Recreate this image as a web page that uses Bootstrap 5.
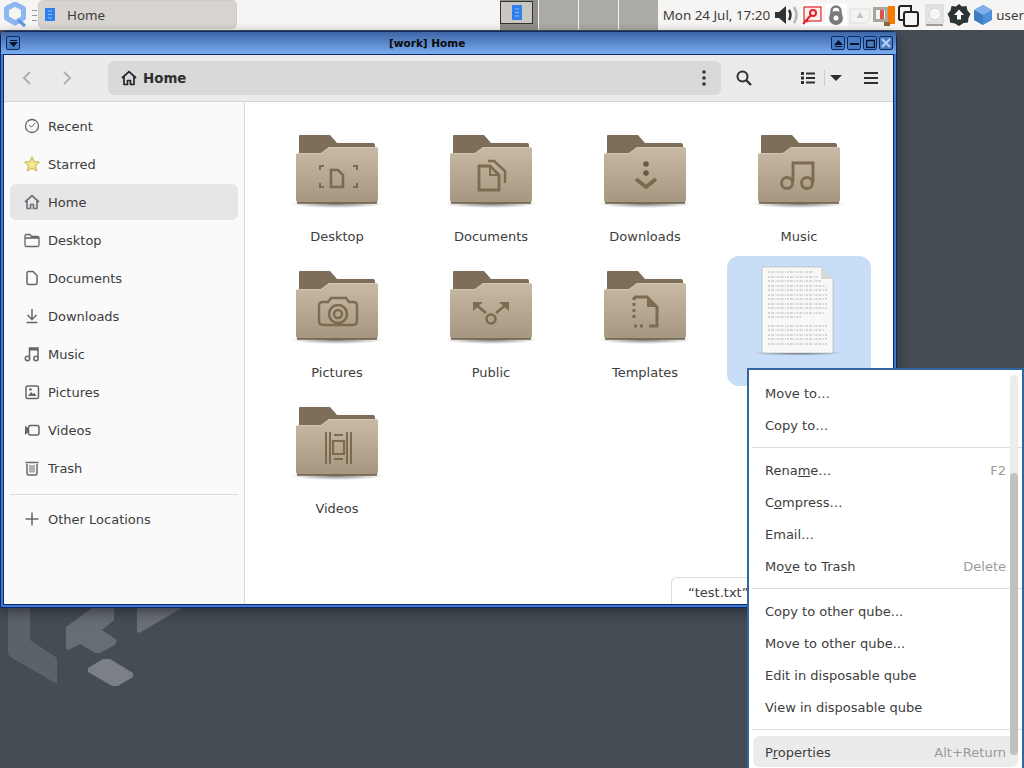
<!DOCTYPE html>
<html lang="en">

<head>
    <meta charset="UTF-8">
    <meta name="viewport" content="width=device-width, initial-scale=1.0">
    <title>Home</title>
    <link href="https://cdn.jsdelivr.net/npm/bootstrap@5.3.0/dist/css/bootstrap.min.css" rel="stylesheet">
    <style>
        html, body { height: 100%; overflow: hidden; }
        body { background: #454c54; font-family: "DejaVu Sans", sans-serif; font-size: 13px; color: #3d3d3d; }
        .desk { position: relative; width: 1024px; height: 768px; overflow: hidden; }

        /* top panel */
        .panel { height: 30px; background: #f6f5f3; font-family: "Noto Sans", sans-serif; font-size: 13.4px; color: #3c3c3c; }
        .panel svg { display: block; flex: none; }
        .q-logo { margin-left: 4px; }
        .grip { width: 5px; height: 11px; margin: 0 1px 0 5px; border-top: 1px solid #999; border-bottom: 1px solid #999; position: relative; }
        .grip::after { content: ""; position: absolute; left: 0; right: 0; top: 4px; border-top: 1px solid #999; }
        .task-btn { width: 200px; height: 29px; margin-bottom: 1px; background: #d8d4cf; border: 1px solid #cfcbc5; border-radius: 5px; padding-left: 6px; gap: 12px; }
        .task-btn span { padding-top: 2px; }
        .pager { margin-left: 263px; width: 158px; height: 30px; gap: 1px; }
        .pager-cell { flex: 1; background: #abaaa4; }
        .pager-cell.now { background: #8f8e89; flex: none; width: 38px; padding-top: 1px; }
        .mini-win { width: 33px; height: 23px; background: #cac7c1; border: 1px solid #33332f; }
        .clock { margin-left: 5px; width: 113px; white-space: nowrap; }
        .tray { gap: 2px; }
        .who { margin-left: 3px; }

        /* wallpaper logo + window */
        .wall-logo { position: absolute; left: 0; top: 600px; }
        .win { position: absolute; left: 0; top: 31px; width: 897px; height: 577px; background: #3f78d8; border: 1px solid #0b2a63; border-radius: 6px 6px 0 0; box-shadow: 0 4px 12px rgba(20, 24, 30, .55); }
        .win-title { height: 22px; padding: 0 3px 0 5px; background: linear-gradient(#3d65a5, #79acf0); }
        .win-title b { font-size: 10.5px; color: #0a0a0a; line-height: 1; margin-left: 369px; }
        .wm-btn { width: 14px; height: 14px; border: 1px solid #0b2a63; border-radius: 2px; background: #4a7cc4; }
        .wm-btns { gap: 2px; }
        .win-body { position: absolute; left: 2px; right: 2px; top: 22px; bottom: 2px; background: #fff; border: 1px solid #0b2a63; }
        .tool-bar { height: 47px; background: #ebebeb; border-bottom: 1px solid #d4d4d4; }
        .nav-arrows { width: 104px; padding-left: 15px; gap: 24px; }
        .path-bar { width: 613px; height: 34px; background: #d9d9d9; border-radius: 6px; padding: 0 14px 0 13px; font-size: 13.4px; font-weight: 700; color: #2e2e2e; gap: 6px; }
        .path-bar span { padding-top: 2px; }
        .tool-icons { margin-left: 15px; }
        .list-btn { margin-left: 48px; }
        .view-sep { margin: 0 5px 0 8px; }
        .menu-btn { margin-left: 22px; }
        .side-bar { width: 241px; flex: none; background: #fafafa; border-right: 1px solid #d9d9d9; padding: 6px 6px 0 6px; }
        .side-item { height: 36px; margin-bottom: 2px; padding-left: 14px; gap: 8px; border-radius: 6px; color: #3d3d3d; line-height: 22px; }
        .side-item span { padding-top: 2px; }
        .side-item.here { background: #e6e6e6; }
        .side-sep { border-top: 1px solid #dcdcdc; margin: 8px 0 6px; }
        .files { flex: 1; padding: 18px 0 0 20px; gap: 6px 10px; display: grid; grid-template-columns: repeat(4, 144px); grid-auto-rows: 130px; }
        .file-cell { border-radius: 12px; text-align: center; padding-top: 3px; color: #3d3d3d; }
        .file-cell svg { display: block; margin: 0 auto; }
        .file-cell span { display: block; margin-top: 8px; line-height: 20px; }
        .file-cell.sel { background: #c8ddf6; }
        .floating { position: absolute; left: 667px; bottom: 0; height: 27px; width: 200px; padding-left: 16px; line-height: 29px; background: #fff; border: 1px solid #dcdcdc; border-bottom: 0; border-radius: 6px 6px 0 0; }

        /* context menu */
        .ctx.dropdown-menu { position: absolute; left: 747px; top: 368px; width: 277px; height: 402px; padding: 7px 0 0 0; margin: 0; border: 2px solid #33669f; border-radius: 0; font-size: 13px; min-width: 0; background: #fff; color: #3d3d3d; }
        .ctx .dropdown-item { height: 32px; line-height: 34px; padding: 0 16px; color: #3d3d3d; display: flex; justify-content: space-between; }
        .ctx .dropdown-item.hot { background: #ebebeb; height: 31px; line-height: 33px; margin: 1px 4px 0; padding: 0 12px; width: auto; border-radius: 6px; }
        .ctx .dropdown-divider { margin: 6px 0 6px 3px; border-top: 1px solid #dcdcdc; opacity: 1; height: 0; }
        .keys { color: #9a9a9a; }
        .trough { position: absolute; right: 4px; top: 5px; width: 8px; height: 383px; border-radius: 4px; background: #ececec; }
        .thumb { position: absolute; left: 0; right: 0; top: 98px; bottom: 3px; border-radius: 4px; background: #c0c0c0; }
    </style>
</head>

<body>
    <svg width="0" height="0" class="position-absolute">
        <defs>
            <linearGradient id="fold" x1="0" y1="0" x2="0" y2="1">
                <stop offset="0" stop-color="#c8baa4" />
                <stop offset="1" stop-color="#a5967f" />
            </linearGradient>
            <radialGradient id="shade">
                <stop offset="0" stop-color="#000" stop-opacity=".5" />
                <stop offset="1" stop-color="#000" stop-opacity="0" />
            </radialGradient>
            <symbol id="folder" viewBox="0 0 96 96">
                <ellipse cx="48" cy="81" rx="47" ry="4" fill="url(#shade)" />
                <path d="M11 12H41L48 20H84Q86 20 86 22V40H10V13Q10 12 11 12Z" fill="#7d6d59" />
                <path d="M9 30H32L40 24H87Q89 24 89 26V76Q89 80 86 80H10Q7 80 7 76V32Q7 30 9 30Z" fill="url(#fold)" />
                <path d="M8 30.500H32L40 24.500H88" fill="none" stroke="#d6cab7" stroke-width=".8" />
                <path d="M8 80H88" stroke="#6a5c4b" stroke-width="1.400" />
            </symbol>
            <!-- sidebar icons -->
            <symbol id="i-home" viewBox="0 0 16 16"><path d="M1 8 8 1.600 15 8M3 7V14.500H6.500V10.500H9.500V14.500H13V7" fill="none" stroke="currentColor" stroke-width="1.700" stroke-linejoin="round" /></symbol>
        </defs>
    </svg>

    <div class="desk">
        <!-- Panel -->
        <div class="panel d-flex align-items-center">
            <svg class="q-logo" width="23" height="26" viewBox="0 0 23 26"><path d="M11 2 19.500 6.500V16L11 21 2.500 16V6.500Z" fill="none" stroke="#8db6f2" stroke-width="5" stroke-linejoin="round" /><path d="M14 18 21 24" stroke="#5c97ea" stroke-width="3" /></svg>
            <div class="grip"></div>
            <div class="task-btn d-flex align-items-center">
                <svg width="10" height="13" viewBox="0 0 10 13"><rect width="10" height="13" fill="#2f80ed" /><path d="M3 3H7M3 6.500H7M3 10H7" stroke="#8fbdf7" /></svg>
                <span>Home</span>
            </div>
            <div class="pager d-flex">
                <div class="pager-cell now"><div class="mini-win d-flex justify-content-center align-items-center"><svg width="10" height="15" viewBox="0 0 10 15"><rect width="10" height="15" fill="#2f80ed" /><path d="M3 4H7M3 7.500H7M3 11H7" stroke="#8fbdf7" /></svg></div></div>
                <div class="pager-cell"></div>
                <div class="pager-cell"></div>
                <div class="pager-cell"></div>
            </div>
            <div class="clock">Mon 24 Jul, 17:20</div>
            <div class="tray d-flex align-items-center">
                <svg width="24" height="22" viewBox="0 0 24 22"><path d="M0 8H4L11 2V20L4 14H0Z" fill="#2e3436" /><path d="M14 6Q17 11 14 16" fill="none" stroke="#2e3436" stroke-width="2.500" /><path d="M19 3Q24 11 19 19" fill="none" stroke="#b5b5b5" stroke-width="2.500" /></svg>
                <svg width="22" height="22" viewBox="0 0 22 22"><rect width="22" height="22" fill="#fff" /><rect x="3" y="3" width="17" height="14" fill="#fdeeee" stroke="#e2222a" stroke-width="1.200" /><circle cx="12" cy="9" r="3" fill="none" stroke="#e2222a" stroke-width="2" /><path d="M10 11 2 20M5 15 7 18" stroke="#e2222a" stroke-width="2" /></svg>
                <svg width="22" height="22" viewBox="0 0 22 22"><rect width="22" height="22" fill="#fff" /><path d="M6.500 10V7A4.500 4.500 0 0 1 15.500 7V10" fill="none" stroke="#7a7a7a" stroke-width="2.500" /><circle cx="11" cy="14" r="7" fill="#7a7a7a" /><circle cx="11" cy="14" r="2.500" fill="#fff" /></svg>
                <svg width="22" height="22" viewBox="0 0 22 22"><path d="M1 5H21V15L16 19H1Z" fill="#f3f3f3" stroke="#dcdcdc" /><path d="M11 8 14.500 14H7.500Z" fill="#c4c4c4" /></svg>
                <svg width="22" height="24" viewBox="0 0 22 24"><rect x="0" y="4" width="15" height="15" fill="#aaa59d" /><rect x="3" y="7" width="9" height="9" fill="#f3f3f3" /><rect x="7" y="7" width="4" height="9" fill="#d9534f" /><rect x="15" y="3" width="7" height="18" fill="#f57c00" /><rect x="11" y="19" width="6" height="4" fill="#8a6a3b" /></svg>
                <svg width="22" height="24" viewBox="0 0 22 24"><path d="M2 17V5Q2 3 4 3H14V8M2 17H6" fill="none" stroke="#222" stroke-width="2" /><rect x="7" y="9" width="14" height="14" rx="2" fill="#f6f5f3" stroke="#222" stroke-width="2" /></svg>
                <svg width="20" height="24" viewBox="0 0 20 24" class="ms-1"><rect x="1" y="2" width="17" height="18" fill="#e6e6e6" stroke="#d0d0d0" /><circle cx="10" cy="11" r="6" fill="#f6f6f6" stroke="#cfcfcf" /><path d="M1 22H18" stroke="#444" /></svg>
                <svg width="24" height="24" viewBox="0 0 24 24"><path d="M12 1 15 3.500 19.500 3 20.500 7.500 23.500 11 21.500 15 21 19.500 16.500 20 12 23 8 20.500 3 19.500 2.500 15 .5 11 3.500 7.500 4.500 3 9 3.500Z" fill="#2e3436" /><path d="M12 6.500 17 12H14V16.500H10V12H7Z" fill="#fff" /></svg>
                <svg width="20" height="24" viewBox="0 0 20 24"><path d="M10 2 19 7V17L10 22 1 17V7Z" fill="#4f8fd9" /><path d="M10 2 19 7 10 12 1 7Z" fill="#7fb2ea" /><path d="M10 12V22L1 17V7Z" fill="#3f7cc4" /></svg>
            </div>
            <div class="who">user</div>
        </div>

        <!-- wallpaper -->
        <svg class="wall-logo" width="200" height="100" viewBox="0 0 200 100">
            <path d="M8 0H30V40L57 58V84L12 58Q8 55 8 52Z" fill="#5c6269" />
            <path d="M66 27 92 8H114V20L102 30 117 40 115 45 100 53H95L80 44 68 50 66 48Z" fill="#676d74" />
            <path d="M137 8H182L139 33 137 32Z" fill="#6a7076" />
            <path d="M88 68 103 59H110L133 73V77L118 86H112L88 72Z" fill="#7b8087" />
        </svg>

        <!-- Window -->
        <div class="win">
            <div class="win-title d-flex align-items-center">
                <div class="wm-btn d-flex align-items-center justify-content-center"><svg width="9" height="7" viewBox="0 0 9 7"><path d="M1 0H8V1H1ZM0 2H9L4.500 7Z" fill="#06122e" /></svg></div>
                <b>[work] Home</b>
                <div class="wm-btns d-flex ms-auto">
                    <div class="wm-btn d-flex align-items-center justify-content-center"><svg width="9" height="7" viewBox="0 0 9 7"><path d="M4.500 0 9 5H0ZM1 6H8V7H1Z" fill="#06122e" /></svg></div>
                    <div class="wm-btn d-flex align-items-end justify-content-center pb-1"><svg width="9" height="2" viewBox="0 0 9 2"><rect width="9" height="2" fill="#06122e" /></svg></div>
                    <div class="wm-btn d-flex align-items-center justify-content-center"><svg width="9" height="9" viewBox="0 0 9 9"><path d="M.5 1.500H8.500V8.500H.5Z" fill="none" stroke="#06122e" stroke-width="1.500" /></svg></div>
                    <div class="wm-btn d-flex align-items-center justify-content-center"><svg width="10" height="10" viewBox="0 0 10 10"><path d="M1 1 9 9M9 1 1 9" stroke="#b9d2f3" stroke-width="2" /></svg></div>
                </div>
            </div>
            <div class="win-body d-flex flex-column">
                <div class="tool-bar d-flex align-items-center">
                    <div class="nav-arrows d-flex align-items-center">
                        <svg width="16" height="16" viewBox="0 0 16 16"><path d="M11 2 5 8 11 14" fill="none" stroke="#b0b0b0" stroke-width="2" /></svg>
                        <svg width="16" height="16" viewBox="0 0 16 16"><path d="M5 2 11 8 5 14" fill="none" stroke="#b0b0b0" stroke-width="2" /></svg>
                    </div>
                    <div class="path-bar d-flex align-items-center">
                        <svg width="16" height="16" class="text-dark"><use href="#i-home" /></svg>
                        <span class="flex-grow-1">Home</span>
                        <svg width="6" height="16" viewBox="0 0 6 16"><circle cx="3" cy="2" r="1.800" fill="#333" /><circle cx="3" cy="8" r="1.800" fill="#333" /><circle cx="3" cy="14" r="1.800" fill="#333" /></svg>
                    </div>
                    <div class="tool-icons d-flex align-items-center">
                        <svg width="16" height="16" viewBox="0 0 16 16"><circle cx="6.500" cy="6.500" r="5" fill="none" stroke="#2e2e2e" stroke-width="2" /><path d="M10 10 15 15" stroke="#2e2e2e" stroke-width="2.400" /></svg>
                        <svg class="list-btn" width="16" height="14" viewBox="0 0 16 14"><path d="M1 1H4V4H1ZM1 5.500H4V8.500H1ZM1 10H4V13H1Z" fill="#2e2e2e" /><path d="M6 2.500H15M6 7H15M6 11.500H15" stroke="#2e2e2e" stroke-width="2" /></svg>
                        <div class="vr view-sep text-secondary"></div>
                        <svg width="12" height="6" viewBox="0 0 12 6"><path d="M0 0H12L6 6Z" fill="#2e2e2e" /></svg>
                        <svg class="menu-btn" width="14" height="12" viewBox="0 0 14 12"><path d="M0 1H14M0 6H14M0 11H14" stroke="#2e2e2e" stroke-width="2" /></svg>
                    </div>
                </div>

                <div class="d-flex flex-grow-1 position-relative">
                    <div class="side-bar">
                        <div class="side-item d-flex align-items-center">
                            <svg width="16" height="16" viewBox="0 0 16 16"><circle cx="8" cy="8" r="6.500" fill="none" stroke="#666" stroke-width="1.300" /><path d="M5 7 7.500 9 11 5" fill="none" stroke="#666" /></svg><span>Recent</span></div>
                        <div class="side-item d-flex align-items-center">
                            <svg width="16" height="16" viewBox="0 0 16 16"><path d="M8 .8 10.200 5.600 15.400 6.200 11.500 9.700 12.600 15 8 12.300 3.400 15 4.500 9.700 .6 6.200 5.800 5.600Z" fill="#f5e68f" stroke="#c8b04a" /></svg><span>Starred</span></div>
                        <div class="side-item here d-flex align-items-center">
                            <svg width="16" height="16" class="text-secondary"><use href="#i-home" /></svg><span>Home</span></div>
                        <div class="side-item d-flex align-items-center">
                            <svg width="16" height="16" viewBox="0 0 16 16"><path d="M1 13V4Q1 2.500 2.500 2.500H6L7.500 4.500H13.500Q15 4.500 15 6V13Q15 14.500 13.500 14.500H2.500Q1 14.500 1 13ZM1.500 6H14.500" fill="none" stroke="#666" stroke-width="1.300" /></svg><span>Desktop</span></div>
                        <div class="side-item d-flex align-items-center">
                            <svg width="16" height="16" viewBox="0 0 16 16"><path d="M3 3Q3 1.500 4.500 1.500H9L13 5.500V13Q13 14.500 11.500 14.500H4.500Q3 14.500 3 13Z" fill="none" stroke="#666" stroke-width="1.500" /></svg><span>Documents</span></div>
                        <div class="side-item d-flex align-items-center">
                            <svg width="16" height="16" viewBox="0 0 16 16"><path d="M8 1V11M3.500 7 8 11.500 12.500 7M2.500 14.500H13.500" fill="none" stroke="#666" stroke-width="1.500" /></svg><span>Downloads</span></div>
                        <div class="side-item d-flex align-items-center">
                            <svg width="16" height="16" viewBox="0 0 16 16"><path d="M5.500 11.500V2H14V11.500" fill="none" stroke="#666" stroke-width="1.500" /><path d="M5.500 2H14V4.500H5.500Z" fill="#666" /><circle cx="3.500" cy="12.500" r="2.200" fill="none" stroke="#666" stroke-width="1.500" /><circle cx="12" cy="12.500" r="2.200" fill="none" stroke="#666" stroke-width="1.500" /></svg><span>Music</span></div>
                        <div class="side-item d-flex align-items-center">
                            <svg width="16" height="16" viewBox="0 0 16 16"><rect x="2" y="2" width="12.500" height="12.500" rx="1.500" fill="none" stroke="#666" stroke-width="1.500" /><path d="M4 12 7 8 9 10 10.500 9 12.500 12Z" fill="#666" /><circle cx="6.500" cy="5.500" r="1.300" fill="#666" /></svg><span>Pictures</span></div>
                        <div class="side-item d-flex align-items-center">
                            <svg width="16" height="16" viewBox="0 0 16 16"><rect x="4.500" y="3.500" width="10.500" height="9.500" rx="2" fill="none" stroke="#666" stroke-width="1.500" /><path d="M1 3.500 4.500 6.500V10L1 13Z" fill="#666" /></svg><span>Videos</span></div>
                        <div class="side-item d-flex align-items-center">
                            <svg width="16" height="16" viewBox="0 0 16 16"><path d="M1.500 2.500H14.500" stroke="#666" stroke-width="1.500" /><path d="M3 4V13.500Q3 15 4.500 15H11.500Q13 15 13 13.500V4" fill="none" stroke="#666" stroke-width="1.500" /><path d="M6 5V12.500M8 5V12.500M10 5V12.500" stroke="#666" /></svg><span>Trash</span></div>
                        <div class="side-sep"></div>
                        <div class="side-item d-flex align-items-center">
                            <svg width="16" height="16" viewBox="0 0 16 16"><path d="M8 1.500V14.500M1.500 8H14.500" stroke="#666" stroke-width="1.500" /></svg><span>Other Locations</span></div>
                    </div>

                    <div class="files">
                        <div class="file-cell">
                            <svg width="96" height="96"><use href="#folder" />
                                <path d="M35 43H31V47M64 43H68V47M31 60V64H35M68 60V64H64" fill="none" stroke="#7d6a50" stroke-width="2" />
                                <path d="M42 47H49L54 52V64H42Z" fill="none" stroke="#7d6a50" stroke-width="2.600" />
                            </svg><span>Desktop</span></div>
                        <div class="file-cell">
                            <svg width="96" height="96"><use href="#folder" />
                                <path d="M36 43H47L56 52V67H36Z" fill="none" stroke="#7d6a50" stroke-width="2.800" />
                                <path d="M47 44V52H56" fill="none" stroke="#7d6a50" stroke-width="2" />
                                <path d="M45 38H51L62 48V60" fill="none" stroke="#7d6a50" stroke-width="2.400" />
                            </svg><span>Documents</span></div>
                        <div class="file-cell">
                            <svg width="96" height="96"><use href="#folder" />
                                <circle cx="49" cy="41" r="2.800" fill="#6b583f" />
                                <circle cx="49" cy="50" r="2.800" fill="#6b583f" />
                                <path d="M39 56 49 64 59 56" fill="none" stroke="#7d6a50" stroke-width="4" />
                            </svg><span>Downloads</span></div>
                        <div class="file-cell">
                            <svg width="96" height="96"><use href="#folder" />
                                <circle cx="36" cy="60" r="5.500" fill="none" stroke="#7d6a50" stroke-width="2.800" />
                                <circle cx="56" cy="60" r="5.500" fill="none" stroke="#7d6a50" stroke-width="2.800" />
                                <path d="M42 59V40H62V59" fill="none" stroke="#7d6a50" stroke-width="2.800" />
                            </svg><span>Music</span></div>
                        <div class="file-cell">
                            <svg width="96" height="96"><use href="#folder" />
                                <path d="M34 43H39L42 39H57L60 43H64Q68 43 68 47V62Q68 66 64 66H34Q30 66 30 62V47Q30 43 34 43Z" fill="none" stroke="#7d6a50" stroke-width="2.400" />
                                <circle cx="49" cy="55" r="9" fill="none" stroke="#7d6a50" stroke-width="2.600" />
                                <circle cx="49" cy="55" r="4" fill="none" stroke="#7d6a50" stroke-width="2.400" />
                            </svg><span>Pictures</span></div>
                        <div class="file-cell">
                            <svg width="96" height="96"><use href="#folder" />
                                <circle cx="48" cy="60" r="4.500" fill="none" stroke="#7d6a50" stroke-width="2.600" />
                                <path d="M31 44 43 54M65 44 53 54" stroke="#7d6a50" stroke-width="2.800" />
                                <path d="M30 43H40L30 52ZM66 43H56L66 52Z" fill="#7d6a50" />
                            </svg><span>Public</span></div>
                        <div class="file-cell">
                            <svg width="96" height="96"><use href="#folder" />
                                <path d="M37 38H50L60 48V67H52" fill="none" stroke="#7d6a50" stroke-width="3" />
                                <path d="M37 38V60M37 67H49" fill="none" stroke="#7d6a50" stroke-width="3" stroke-dasharray="3 3" />
                                <path d="M50 39V48H59Z" fill="#7d6a50" />
                            </svg><span>Templates</span></div>
                        <div class="file-cell sel">
                            <svg width="96" height="96" viewBox="0 0 96 96">
                                <ellipse cx="47" cy="94" rx="44" ry="3" fill="url(#shade)" />
                                <path d="M11 8H70L82 20V94H11Z" fill="#f8f8f6" stroke="#a9adb0" stroke-width=".6" />
                                <path d="M70 8V20H82Z" fill="#d9d9d9" />
                                <path d="M17 13H63M17 18H67M17 22H70M17 27H75M17 31H76M17 36H76M17 40H76M17 45H76M17 49H76M17 54H74M17 58H50M17 67H76M17 71H74M17 76H76M17 80H76M17 85H76" stroke="#a0a3a6" stroke-width=".8" stroke-dasharray="2 1 3 1.500 1 1" />
                            </svg><span>test.txt</span></div>
                        <div class="file-cell">
                            <svg width="96" height="96"><use href="#folder" />
                                <path d="M37 37V69M62 37V69M41 37V69M58 37V69M45 40H54M45 64H54" fill="none" stroke="#7d6a50" stroke-width="2" />
                                <path d="M44 46H55V59H44Z" fill="none" stroke="#7d6a50" stroke-width="2.200" />
                            </svg><span>Videos</span></div>
                    </div>
                    <div class="floating">“test.txt”</div>
                </div>
            </div>
        </div>

        <!-- Context menu -->
        <div class="ctx dropdown-menu show">
            <div class="dropdown-item">Move to…</div>
            <div class="dropdown-item">Copy to…</div>
            <div class="dropdown-divider"></div>
            <div class="dropdown-item"><span>Rena<u>m</u>e…</span><span class="keys">F2</span></div>
            <div class="dropdown-item"><span>C<u>o</u>mpress…</span></div>
            <div class="dropdown-item">Email…</div>
            <div class="dropdown-item"><span>Mo<u>v</u>e to Trash</span><span class="keys">Delete</span></div>
            <div class="dropdown-divider"></div>
            <div class="dropdown-item">Copy to other qube...</div>
            <div class="dropdown-item">Move to other qube...</div>
            <div class="dropdown-item">Edit in disposable qube</div>
            <div class="dropdown-item">View in disposable qube</div>
            <div class="dropdown-divider"></div>
            <div class="dropdown-item hot"><span>P<u>r</u>operties</span><span class="keys">Alt+Return</span></div>
            <div class="trough"><div class="thumb"></div></div>
        </div>
    </div>

    <script src="https://cdn.jsdelivr.net/npm/bootstrap@5.3.0/dist/js/bootstrap.bundle.min.js"></script>
</body>

</html>
